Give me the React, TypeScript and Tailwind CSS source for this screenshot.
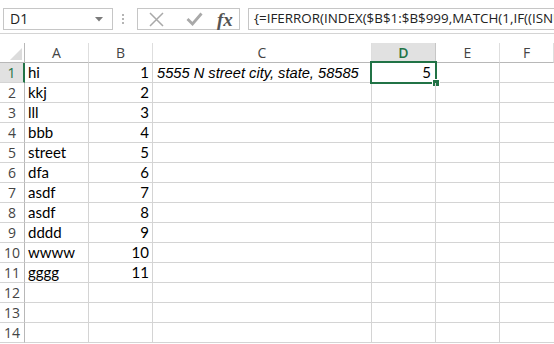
import React from 'react';

const cols = [
  { key: 'A', w: 'w-[64px]' },
  { key: 'B', w: 'w-[64px]' },
  { key: 'C', w: 'w-[219px]' },
  { key: 'D', w: 'w-[64px]' },
  { key: 'E', w: 'w-[64px]' },
  { key: 'F', w: 'flex-1' },
];

const data: [string, number][] = [
  ['hi', 1],
  ['kkj', 2],
  ['lll', 3],
  ['bbb', 4],
  ['street', 5],
  ['dfa', 6],
  ['asdf', 7],
  ['asdf', 8],
  ['dddd', 9],
  ['wwww', 10],
  ['gggg', 11],
];

const ui = { fontFamily: '"Open Sans", "Noto Sans", sans-serif' };
const cellFont = { fontFamily: 'Lato, "Noto Sans", sans-serif' };

const FormulaBar: React.FC = () => (
  <div className="flex items-start h-[34px] pt-[8px] border-b border-[#d4d4d4] bg-white" style={ui}>
    {/* name box */}
    <div className="ml-[3px] w-[110px] h-[22px] border border-[#c6c6c6] flex items-center justify-between pl-[6px] pr-[9px]">
      <span className="text-[14px] text-[#222] leading-none">D1</span>
      <svg width="8" height="5" viewBox="0 0 8 5">
        <polygon points="0,0 8,0 4,4.5" fill="#7b7b7b" />
      </svg>
    </div>
    {/* grip dots */}
    <div className="ml-[8px] w-[3px] h-[22px] flex flex-col items-center justify-center gap-[2px]">
      <div className="w-[2px] h-[2px] bg-[#b5b5b5]" />
      <div className="w-[2px] h-[2px] bg-[#b5b5b5]" />
      <div className="w-[2px] h-[2px] bg-[#b5b5b5]" />
    </div>
    {/* cancel / enter / fx */}
    <div className="ml-[13px] w-[103px] h-[22px] border border-[#c6c6c6] flex items-center pl-[10px]">
      <svg width="17" height="17" viewBox="0 0 17 17">
        <path d="M2 2 L15 15 M15 2 L2 15" stroke="#a9a9a9" strokeWidth="1.5" fill="none" />
      </svg>
      <svg className="ml-[21px]" width="17" height="14" viewBox="0 0 17 14">
        <path d="M1.5 7 L6.5 12 L15.5 1.5" stroke="#a9a9a9" strokeWidth="2.8" fill="none" />
      </svg>
      <span
        className="ml-[14px] text-[19px] italic font-bold text-[#555] leading-none"
        style={{ fontFamily: '"Liberation Serif", "DejaVu Serif", serif' }}
      >
        fx
      </span>
    </div>
    {/* formula */}
    <div className="ml-[8px] flex-1 h-[22px] border border-r-0 border-[#c6c6c6] flex items-center pl-[5px] overflow-hidden whitespace-nowrap">
      <span className="text-[13.4px] text-[#222] leading-none">
        {'{=IFERROR(INDEX($B$1:$B$999,MATCH(1,IF((ISNU'}
      </span>
    </div>
  </div>
);

const HeaderRow: React.FC = () => (
  <div className="flex h-[20px]" style={ui}>
    <div className="w-[25px] border-r border-b border-[#b8b8b8] flex items-end justify-end pr-[2px] pb-[2px]">
      <svg width="12" height="12" viewBox="0 0 12 12">
        <polygon points="12,0 12,12 0,12" fill="#dcdcdc" />
      </svg>
    </div>
    {cols.map((c) =>
      c.key === 'D' ? (
        <div
          key={c.key}
          className={`${c.w} bg-[#e1e1e1] border-r border-[#c6c6c6] border-b-2 border-b-[#217346] flex items-center justify-center text-[14px] font-semibold text-[#217346]`}
        >
          {c.key}
        </div>
      ) : (
        <div
          key={c.key}
          className={`${c.w} border-r border-b border-r-[#dedede] border-b-[#b8b8b8] flex items-center justify-center text-[14px] text-[#444]`}
        >
          {c.key}
        </div>
      )
    )}
  </div>
);

const Row: React.FC<{ n: number; a?: string; b?: number }> = ({ n, a, b }) => {
  const sel = n === 1;
  return (
    <div className="flex h-[20px]">
      <div
        className={
          sel
            ? 'w-[25px] bg-[#e1e1e1] border-b border-[#d4d4d4] border-r-2 border-r-[#217346] flex items-center justify-center text-[14px] text-[#217346]'
            : 'w-[25px] border-r border-b border-r-[#b8b8b8] border-b-[#d4d4d4] flex items-center justify-center text-[14px] text-[#444]'
        }
        style={ui}
      >
        {n}
      </div>
      <div className="w-[64px] border-r border-b border-[#d4d4d4] flex items-center pl-[3px] text-[15px] text-black" style={cellFont}>
        {a}
      </div>
      <div className="w-[64px] border-r border-b border-[#d4d4d4] flex items-center justify-end pr-[3px] text-[15px] text-black" style={cellFont}>
        {b}
      </div>
      <div
        className="w-[219px] border-r border-b border-[#d4d4d4] flex items-center pl-[4px] text-[14.67px] italic text-black whitespace-nowrap"
        style={{ fontFamily: '"Liberation Sans", Arial, sans-serif' }}
      >
        {sel ? '5555 N street city, state, 58585' : ''}
      </div>
      <div className="relative w-[64px] border-r border-b border-[#d4d4d4] flex items-center justify-end pr-[4px] text-[15px] text-black" style={cellFont}>
        {sel && (
          <>
            5
            <div className="absolute -left-[2px] -top-[2px] w-[67px] h-[23px] border-2 border-[#217346]" />
            <div className="absolute left-[60px] top-[16px] w-[8px] h-[8px] bg-[#217346] border border-white" />
          </>
        )}
      </div>
      <div className="w-[64px] border-r border-b border-[#d4d4d4]" />
      <div className="flex-1 border-b border-[#d4d4d4]" />
    </div>
  );
};

export default function App() {
  const rows = Array.from({ length: 14 }, (_, i) => i + 1);
  return (
    <div className="w-[554px] h-[344px] overflow-hidden bg-white">
      <FormulaBar />
      <div className="h-[9px]" />
      <HeaderRow />
      {rows.map((n) => {
        const d = data[n - 1];
        return <Row key={n} n={n} a={d?.[0]} b={d?.[1]} />;
      })}
    </div>
  );
}
